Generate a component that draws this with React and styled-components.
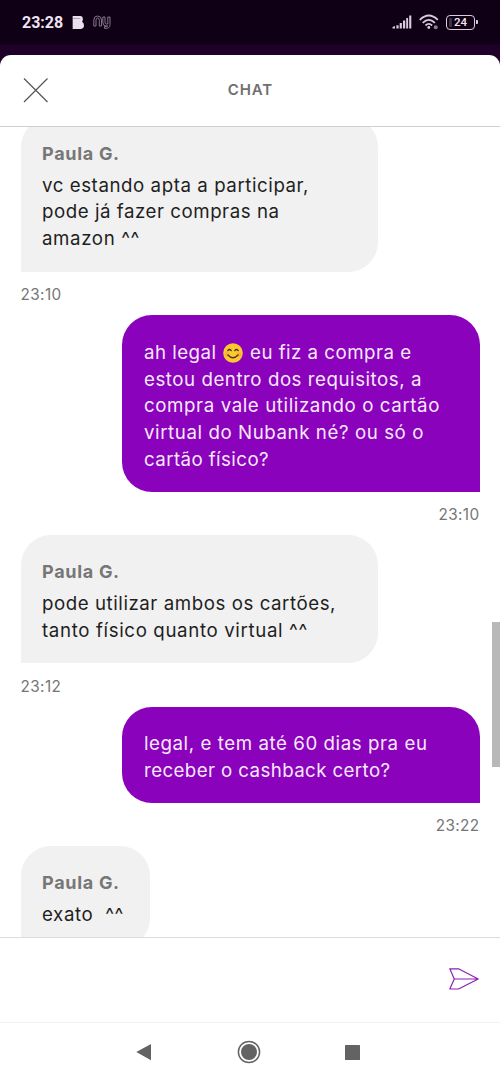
import React, { useLayoutEffect, useRef } from 'react';
import styled, { createGlobalStyle } from 'styled-components';

const GlobalStyle = createGlobalStyle`
  * { box-sizing: border-box; }
  body {
    margin: 0;
    background: #fff;
    font-family: Inter, "Liberation Sans", sans-serif;
  }
`;

const Screen = styled.div`
  width: 500px;
  height: 1082px;
  display: flex;
  flex-direction: column;
  overflow: hidden;
  background: linear-gradient(#100016 0, #100016 44px, #1f0029 45px, #1f0029 100%);
`;

const StatusBar = styled.div`
  flex: none;
  height: 54.5px;
  padding: 0 25px 10px 22px;
  display: flex;
  align-items: center;
  justify-content: space-between;
  color: #eee3f0;
`;

const StatusGroup = styled.div`
  display: flex;
  align-items: center;
  gap: ${({ $gap }) => $gap}px;

  svg { display: block; }
`;

const Clock = styled.span`
  font-family: Roboto, sans-serif;
  font-size: 16px;
  font-weight: 700;
  line-height: 20px;
  transform: translateY(1px);
`;

const Battery = styled.div`
  position: relative;
  width: 29px;
  height: 14.5px;
  border: 1.5px solid #d9ccdd;
  border-radius: 4px;
  display: flex;
  align-items: center;
  justify-content: center;
  background: linear-gradient(90deg, #3d3043 0 5px, transparent 5px);
  background-clip: content-box;
  padding: 2px;
  font-family: Roboto, sans-serif;
  font-size: 11.5px;
  font-weight: 500;
  line-height: 11px;

  &::after {
    content: '';
    position: absolute;
    right: -4px;
    top: 3.5px;
    width: 2px;
    height: 4.5px;
    border-radius: 0 1px 1px 0;
    background: #d9ccdd;
  }
`;

const Sheet = styled.div`
  flex: 1;
  min-height: 0;
  display: flex;
  flex-direction: column;
  border-radius: 11px 11px 0 0;
  background: #fff;
  overflow: hidden;
`;

const Header = styled.header`
  flex: none;
  height: 72.5px;
  padding: 0 23px 1px;
  display: grid;
  grid-template-columns: 26px 1fr 26px;
  align-items: center;
  border-bottom: 1.5px solid #cfcfcf;

  svg { display: block; }
`;

const Title = styled.h1`
  margin: 0;
  padding-left: 1px;
  text-align: center;
  font-size: 15px;
  font-weight: 600;
  letter-spacing: 0.9px;
  color: #6f6f6f;
`;

const Thread = styled.main`
  position: relative;
  flex: none;
  height: 810px;
  overflow: hidden;
`;

const Messages = styled.div`
  margin-top: -10px;
  padding: 0 20.5px;
  display: flex;
  flex-direction: column;
`;

const Message = styled.div`
  display: flex;
  flex-direction: column;
  align-items: ${({ $mine }) => ($mine ? 'flex-end' : 'flex-start')};
`;

const Bubble = styled.div`
  width: ${({ $narrow }) => ($narrow ? 129.5 : 357.5)}px;
  padding: ${({ $mine }) => ($mine ? '24.8px 22px 18.2px' : '23.5px 21.5px 19px')};
  border-radius: ${({ $mine }) => ($mine ? '30px 30px 0 30px' : '30px 30px 30px 0')};
  background: ${({ $mine }) => ($mine ? '#8a02bb' : '#f1f1f1')};
  color: ${({ $mine }) => ($mine ? '#f7e9fb' : '#1f1f1f')};
`;

const Author = styled.div`
  margin-bottom: 6.3px;
  font-size: 18px;
  font-weight: 700;
  line-height: 26px;
  letter-spacing: 0.7px;
  color: #777;
`;

const LineText = styled.div`
  height: 26.7px;
  font-size: 18.7px;
  line-height: 26.7px;
  white-space: pre;

  span { display: inline-block; }
`;

const Time = styled.time`
  height: 43.4px;
  padding-top: 12.5px;
  font-size: 15.3px;
  line-height: 21px;
  letter-spacing: 0.4px;
  color: #767676;
`;

const Emoji = styled.svg`
  display: inline-block;
  width: 20px;
  height: 20px;
  margin: 0 1px;
  vertical-align: -3.5px;
`;

const Scrollbar = styled.div`
  position: absolute;
  right: 0;
  top: 495px;
  width: 8px;
  height: 145px;
  background: #b8b8b8;
`;

const Composer = styled.footer`
  flex: none;
  height: 85px;
  padding: 0 20px 2px;
  display: flex;
  align-items: center;
  justify-content: flex-end;
  border-top: 1.5px solid #dcdcdc;
`;

const NavBar = styled.nav`
  flex: 1;
  padding: 0 140px 1px 136px;
  display: flex;
  align-items: center;
  justify-content: space-between;
  border-top: 1px solid #f2f2f2;
`;

const Smile = () => (
  <Emoji viewBox="0 0 20 20" aria-label="😊">
    <circle cx="10" cy="10" r="9.8" fill="#fbc82f" />
    <circle cx="4" cy="11.5" r="2.3" fill="#f7a13a" opacity="0.7" />
    <circle cx="16" cy="11.5" r="2.3" fill="#f7a13a" opacity="0.7" />
    <path
      d="M4.8 7.6Q6.5 5.4 8.2 7.6M11.8 7.6Q13.5 5.4 15.2 7.6M5 12Q10 17.5 15 12"
      fill="none"
      stroke="#4f3420"
      strokeWidth="1.4"
      strokeLinecap="round"
    />
  </Emoji>
);

// spreads the letters so that the line is as wide as it is set to be
const Line = ({ text, width }) => {
  const ref = useRef(null);

  useLayoutEffect(() => {
    const el = ref.current;
    el.style.letterSpacing = '0px';
    const natural = el.getBoundingClientRect().width;
    el.style.letterSpacing = `${(width - natural) / [...text].length}px`;
  }, [text, width]);

  const [before, after] = text.split('😊');
  return (
    <LineText>
      <span ref={ref}>
        {before}
        {after && <Smile />}
        {after}
      </span>
    </LineText>
  );
};

const messages = [
  {
    author: 'Paula G.',
    time: '23:10',
    lines: [
      ['vc estando apta a participar,', 267],
      ['pode já fazer compras na', 237.5],
      ['amazon ^^', 98],
    ],
  },
  {
    mine: true,
    time: '23:10',
    lines: [
      ['ah legal 😊 eu fiz a compra e', 268],
      ['estou dentro dos requisitos, a', 278],
      ['compra vale utilizando o cartão', 296],
      ['virtual do Nubank né? ou só o', 280],
      ['cartão físico?', 125],
    ],
  },
  {
    author: 'Paula G.',
    time: '23:12',
    lines: [
      ['pode utilizar ambos os cartões,', 294],
      ['tanto físico quanto virtual ^^', 266],
    ],
  },
  {
    mine: true,
    time: '23:22',
    lines: [
      ['legal, e tem até 60 dias pra eu', 283.5],
      ['receber o cashback certo?', 246.5],
    ],
  },
  {
    author: 'Paula G.',
    narrow: true,
    lines: [['exato  ^^', 82]],
  },
];

const App = () => (
  <>
    <GlobalStyle />
    <Screen>
      <StatusBar>
        <StatusGroup $gap={9}>
          <Clock>23:28</Clock>
          <svg width="12" height="15" viewBox="-.7 0 12.7 15" fill="#eadfec">
            <path d="M0 .5H8Q10.8 .5 10.8 4 10.8 5.5 10 6.7 12 8 12 10.5 12 14.5 8 14.5H0Z" />
            <path d="M0 3.2H8" stroke="#8d7f92" strokeWidth="0.7" />
          </svg>
          <svg width="18" height="14" viewBox="0 0 18 14" fill="none" stroke="#85748a" strokeWidth="1">
            <path d="M.8 11V5Q.8 1 4.5 1 8.5 1 8.5 5V11H6.3V5.3Q6.3 3 4.6 3 3 3 3 5.3V11Z" />
            <path d="M9.8 2V7Q9.8 11 13 11H14.7Q14.5 12 11.5 11.5V13.3Q17 14 17 9.5V2H14.8V9H13.4Q12 9 12 7V2Z" />
          </svg>
        </StatusGroup>
        <StatusGroup $gap={7}>
          <svg width="20" height="14" viewBox="0 0 20 14" fill="#d9ccdd">
            <path d="M.5 13.5V12L3 11V13.5ZM4.4 10.3H6.6V13.5H4.4ZM7.7 8H9.9V13.5H7.7ZM11 5.5H13.2V13.5H11ZM14.2 3H16.1V13.5H14.2ZM17.2.5H19.3V13.5H17.2Z" />
          </svg>
          <svg width="20" height="16" viewBox="0 0 20 16" fill="none" stroke="#d9ccdd" strokeWidth="1.8">
            <path d="M.8 5.8Q9.8-2.8 18.8 5.8M3.7 8.8Q9.8 3 15.9 8.8M6.5 11.5Q9.8 8.3 13.1 11.5" />
            <circle cx="9.8" cy="13.5" r="1.4" fill="#d9ccdd" stroke="none" />
            <circle cx="16.7" cy="13.2" r="2" fill="#8b7c90" stroke="none" />
          </svg>
          <Battery>24</Battery>
        </StatusGroup>
      </StatusBar>

      <Sheet>
        <Header>
          <svg width="26" height="26" viewBox="0 0 26 26" stroke="#555" strokeWidth="1.2">
            <path d="M1 1.5L24.5 25M24.5 1.5L1 25" />
          </svg>
          <Title>CHAT</Title>
        </Header>

        <Thread>
          <Messages>
            {messages.map(({ author, mine, narrow, time, lines }, i) => (
              <Message key={i} $mine={mine}>
                <Bubble $mine={mine} $narrow={narrow}>
                  {author && <Author>{author}</Author>}
                  {lines.map(([text, width]) => (
                    <Line key={text} text={text} width={width} />
                  ))}
                </Bubble>
                {time && <Time>{time}</Time>}
              </Message>
            ))}
          </Messages>
          <Scrollbar />
        </Thread>

        <Composer>
          <svg width="32" height="24" viewBox="0 0 32 24" fill="none" stroke="#8a1fb8" strokeWidth="1.2" strokeLinejoin="round">
            <path d="M1.8 1.8H10.5L30.2 12 10.5 22H1.8L6.3 12ZM6.3 12H30.2" />
          </svg>
        </Composer>

        <NavBar>
          <svg width="16" height="18" viewBox="0 0 16 18" fill="#636363">
            <path d="M15 1V17.2L.3 9.1Z" />
          </svg>
          <svg width="24" height="24" viewBox="0 0 24 24">
            <circle cx="12" cy="12" r="10.6" fill="none" stroke="#636363" strokeWidth="1.5" />
            <circle cx="12" cy="12" r="8" fill="#636363" />
          </svg>
          <svg width="15" height="15" viewBox="0 0 15 15">
            <rect width="15" height="15" rx="0.5" fill="#636363" />
          </svg>
        </NavBar>
      </Sheet>
    </Screen>
  </>
);

export default App;
